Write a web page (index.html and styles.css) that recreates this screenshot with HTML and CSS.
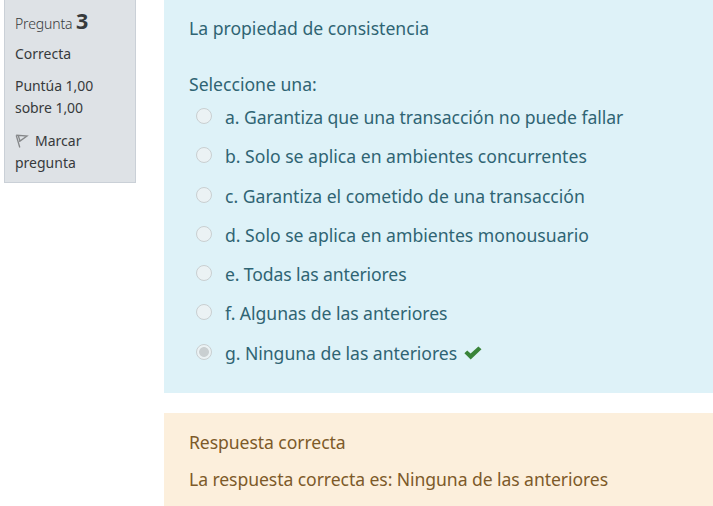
FILE: index.html
```html
<!DOCTYPE html>
<html lang="es">
<head>
<meta charset="utf-8">
<title>Pregunta 3</title>
<link rel="stylesheet" href="styles.css">
</head>
<body>
<main class="question">
  <aside class="info">
    <h3 class="number"><span class="label">Pregunta</span> <b>3</b></h3>
    <div class="state">Correcta</div>
    <div class="grade">Puntúa 1,00<br>sobre 1,00</div>
    <div class="flag"><svg class="flag-icon" viewBox="0 0 14 16" aria-hidden="true"><path d="M1.2 2.2 L12 3 L4.2 8.6 M1.2 2.2 L4.8 14.5 M3.2 2.5 L5 8" /></svg>Marcar<br>pregunta</div>
  </aside>
  <div class="content">
    <section class="formulation">
      <p class="text">La propiedad de consistencia</p>
      <p class="prompt">Seleccione una:</p>
      <div class="answers">
        <label class="option"><i class="radio"></i><span class="snug">a. Garantiza que una transacción no puede fallar</span></label>
        <label class="option"><i class="radio"></i><span>b. Solo se aplica en ambientes concurrentes</span></label>
        <label class="option"><i class="radio"></i><span>c. Garantiza el cometido de una transacción</span></label>
        <label class="option"><i class="radio"></i><span>d. Solo se aplica en ambientes monousuario</span></label>
        <label class="option"><i class="radio"></i><span class="tight">e. Todas las anteriores</span></label>
        <label class="option"><i class="radio"></i><span class="snug">f. Algunas de las anteriores</span></label>
        <label class="option"><i class="radio checked"></i><span class="snug">g. Ninguna de las anteriores</span><svg class="check" viewBox="0 0 18 14" aria-hidden="true"><path d="M0.4 7.2 L3.2 4.4 L6.6 7.6 L14.4 0.4 L17.5 3.3 L6.7 13.6 Z"/></svg></label>
      </div>
    </section>
    <section class="feedback">
      <p class="fb-title">Respuesta correcta</p>
      <p>La respuesta correcta es: Ninguna de las anteriores</p>
    </section>
  </div>
</main>
</body>
</html>
```
FILE: styles.css
```css
* { box-sizing: border-box; }
body {
  margin: 0;
  background: #fff;
  overflow: hidden;
  font-family: "Noto Sans", "Open Sans", sans-serif;
}
p, h3 { margin: 0; }
.question { display: flex; align-items: flex-start; gap: 28px; padding-left: 4px; }
.info {
  flex: 0 0 132px;
  height: 183px;
  padding: 9px 10px 0;
  border: 1px solid #cad0d7;
  border-top: 0;
  background: #dee2e6;
  color: #373a3c;
  font-size: 14px;
  line-height: 22px;
  white-space: nowrap;
}
.number { height: 24px; font-size: 14px; font-weight: 300; line-height: 23px; }
.label { letter-spacing: -0.15px; }
.number b { font-size: 21.5px; font-weight: 700; }
.state { margin-top: 10px; }
.grade { margin-top: 10px; letter-spacing: -0.06px; }
.flag { margin-top: 11px; }
.flag-icon { width: 14px; height: 16px; margin-right: 6px; vertical-align: -3px; fill: none; stroke: #858789; stroke-width: 1.3; }
.content { flex: 1; min-width: 0; white-space: nowrap; font-size: 17.6px; line-height: 28px; }
.formulation { height: 393px; padding: 14px 25px 0; background: #def2f8; color: #2f6473; }
.prompt { margin-top: 28px; }
.answers { display: grid; grid-template-rows: 38.6px repeat(6, 39.3px); }
.option { display: flex; align-items: center; padding-left: 7.3px; }
.snug { letter-spacing: -0.045px; }
.tight { letter-spacing: -0.12px; }
.radio {
  width: 16px;
  height: 16px;
  margin: -2px 12.7px 0 0;
  border: 1px solid #c9cfd1;
  border-radius: 50%;
  background: #ebf2f4;
}
.checked { background: radial-gradient(circle, #c9cfd1 0 4.5px, #ebf2f4 5.3px); }
.check { width: 18px; height: 14px; margin-left: 6.5px; fill: #398439; }
.feedback { height: 93px; margin-top: 20px; padding: 15px 25px 0; background: #fcefdc; color: #7d5a29; letter-spacing: -0.08px; }
.fb-title { margin-bottom: 9px; }
```
